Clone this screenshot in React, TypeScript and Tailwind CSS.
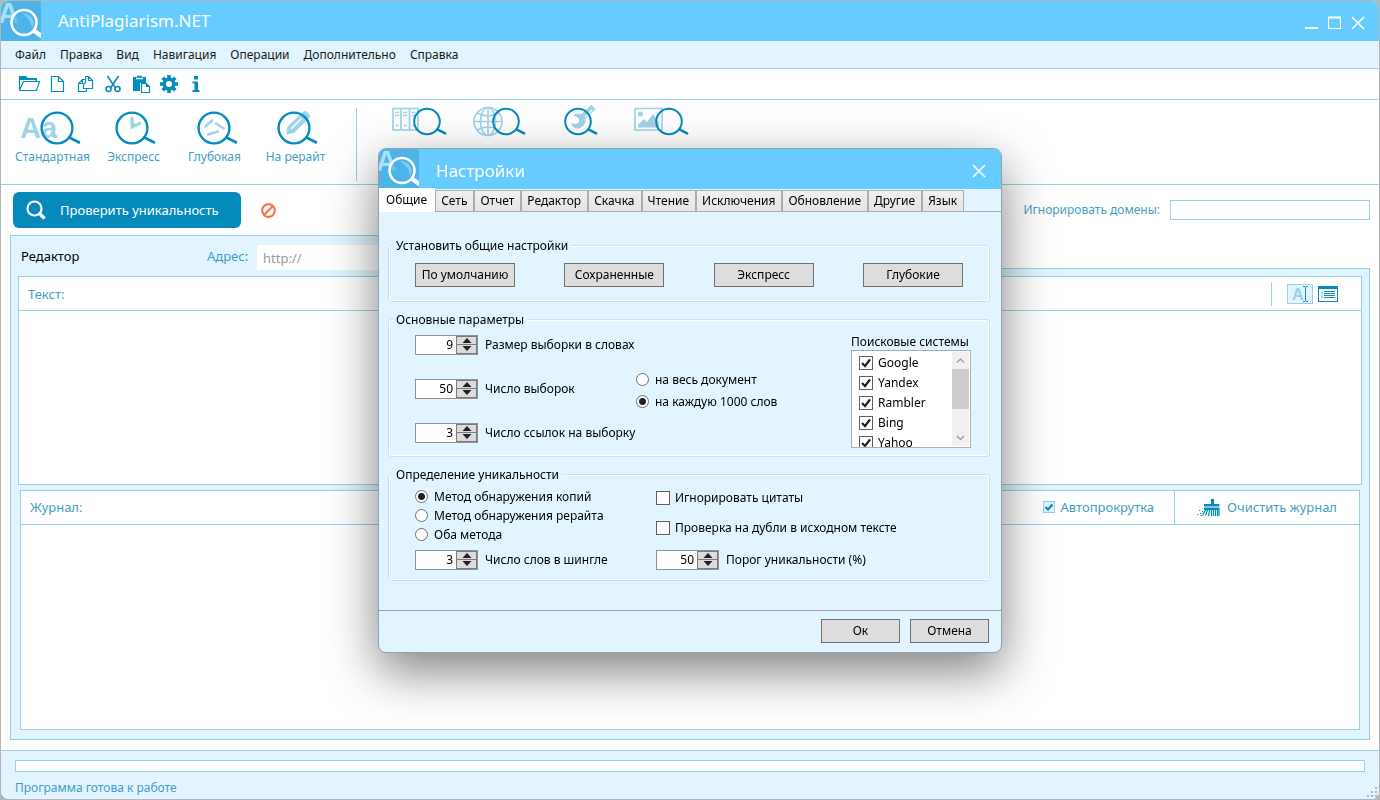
import React from 'react';
import clsx from 'clsx';

const menuItems = ['Файл', 'Правка', 'Вид', 'Навигация', 'Операции', 'Дополнительно', 'Справка'];

const settingsTabs = [
  'Общие', 'Сеть', 'Отчет', 'Редактор', 'Скачка', 'Чтение', 'Исключения', 'Обновление', 'Другие', 'Язык',
];

const presets = ['По умолчанию', 'Сохраненные', 'Экспресс', 'Глубокие'];

const engines = ['Google', 'Yandex', 'Rambler', 'Bing', 'Yahoo'];

const AppLogo: React.FC = () => (
  <svg width="40" height="40" viewBox="0 0 40 40" className="shrink-0" aria-hidden="true">
    <rect width="40" height="40" fill="#4db3e9" />
    <text x="-3" y="22" fontFamily="Liberation Sans, sans-serif" fontWeight="700" fontSize="29" fill="#a5e1fc">A</text>
    <path d="M32 29 L41 35.500" stroke="#fff" strokeWidth="4.500" />
    <circle cx="23" cy="21.500" r="12.500" fill="#4db3e9" fillOpacity="0.7" stroke="#fff" strokeWidth="2.600" />
    <path d="M21 12 q9 0 12 9 q0 4 -2 6 q-1 -9 -10 -15z" fill="#7ccbf3" />
  </svg>
);

const CloseIcon: React.FC = () => (
  <svg width="14" height="14" viewBox="0 0 14 14" aria-hidden="true">
    <path d="M1 1 L13 13 M13 1 L1 13" stroke="#fff" strokeWidth="1.500" fill="none" />
  </svg>
);

const Lens: React.FC<{ cx: number; cy: number; r: number }> = ({ cx, cy, r }) => (
  <g fill="none" stroke="#058bbd" strokeWidth={r > 14 ? 2.4 : 2}>
    <circle cx={cx} cy={cy} r={r} />
    <path
      d={`M${cx + r * 0.8} ${cy + r * 0.62} L${cx + r * 1.42} ${cy + r * 0.93}`}
      strokeWidth={r > 14 ? 2.8 : 2.4}
      strokeLinecap="round"
    />
  </g>
);

const tools = [
  {
    name: 'Открыть',
    icon: (
      <>
        <path d="M1.500 16.500 V3.500 M1.500 16.500 H18.500 L21.500 7.500 H5.500 L1.500 16" fill="none" stroke="#058bbd" strokeWidth="1.200" />
        <path d="M1 2 h7 l2 2 h9 v3.500 h-1.500 v-1.500 h-16.500z" fill="#058bbd" />
      </>
    ),
  },
  {
    name: 'Создать',
    icon: <path d="M5.500 2.500 H12.500 L17.500 7.500 V17.500 H5.500 Z M12.500 2.500 V7.500 H17.500" fill="none" stroke="#058bbd" strokeWidth="1.200" />,
  },
  {
    name: 'Копировать',
    icon: (
      <>
        <path d="M9.500 17.500 H4.500 V9.500 L8.500 5.500 H11.500 M4.500 9.500 H8.500 V5.500 M9.500 17.500 H12.500 V14.500" fill="none" stroke="#058bbd" strokeWidth="1.200" />
        <path d="M9.500 14.500 H18.500 V6.500 L14.500 2.500 H11.500 V8.500 L9.500 10.500 Z M14.500 2.500 V6.500 H18.500" fill="none" stroke="#058bbd" strokeWidth="1.200" />
      </>
    ),
  },
  {
    name: 'Вырезать',
    icon: (
      <g fill="none" stroke="#058bbd" strokeWidth="1.600">
        <path d="M5.500 2 L13.500 14 M16.500 2 L8.500 14" />
        <circle cx="6.500" cy="15" r="2.500" />
        <circle cx="15.500" cy="15" r="2.500" />
      </g>
    ),
  },
  {
    name: 'Вставить',
    icon: (
      <>
        <path d="M3 3 H16 V9 H10 V17 H3 Z" fill="#058bbd" />
        <path d="M6 4.500 H13" stroke="#fff" strokeWidth="1.500" />
        <path d="M7 2.500 H12" stroke="#058bbd" strokeWidth="1.500" />
        <path d="M11.500 9.500 H16.500 L19.500 12.500 V18.500 H11.500 Z M16.500 9.500 V12.500 H19.500" fill="#fff" stroke="#058bbd" strokeWidth="1.200" />
      </>
    ),
  },
  {
    name: 'Настройки',
    icon: (
      <>
        <path
          d="M11 1 V19 M2 10 H20 M4.700 3.700 L17.300 16.300 M17.300 3.700 L4.700 16.300"
          stroke="#058bbd"
          strokeWidth="3.600"
        />
        <circle cx="11" cy="10" r="4.800" fill="#fff" stroke="#058bbd" strokeWidth="3.600" />
      </>
    ),
  },
  {
    name: 'О программе',
    icon: (
      <path d="M8 2 h4 v3.500 h-4z M6.500 7.500 h5.500 v8.500 h1.500 v2 h-7 v-2 h2 v-6.500 h-2z" fill="#058bbd" />
    ),
  },
];

const modes = [
  {
    name: 'Стандартная',
    icon: (
      <>
        <text x="8" y="28" fontFamily="Liberation Sans, sans-serif" fontWeight="700" fontSize="29" fill="#9fd3ea">Aa</text>
        <Lens cx={45} cy={18} r={15.4} />
      </>
    ),
  },
  {
    name: 'Экспресс',
    icon: (
      <>
        <path d="M37.500 7 l3 0 l0.500 7 l6.500 -2.500 l1 2.500 l-11 5.500z" fill="#9fd3ea" />
        <Lens cx={39} cy={18} r={15.4} />
      </>
    ),
  },
  {
    name: 'Глубокая',
    icon: (
      <>
        <path d="M31.500 16.500 L38 10.500 M42 13.500 L49.500 18.500 M34 24.500 L44 21.500" stroke="#9fd3ea" strokeWidth="2.600" strokeLinecap="round" />
        <Lens cx={40} cy={18} r={15.4} />
      </>
    ),
  },
  {
    name: 'На рерайт',
    icon: (
      <>
        <path d="M31 24.500 l1.500 -8 l13 -12.500 l6.500 6.500 l-13 12.500z M47 3 l1.500 -1.500 q2 -1 3.500 0.500 l2.500 2.500 q1.500 2 0 3.500 l-1.500 1.500z" fill="#9fd3ea" />
        <path d="M36 19 L46.500 8.500" stroke="#fff" strokeWidth="1.200" />
        <Lens cx={39} cy={18} r={15.4} />
      </>
    ),
  },
];

const extraModes = [
  {
    name: 'Пакетная проверка',
    icon: (
      <>
        <path
          d="M15 5.500 H40 V27 H15 Z M23 5.500 V27 M31.500 5.500 V27 M17 9.500 h4 M17 12.500 h4 M25 9.500 h4 M25 12.500 h4 M33.500 9.500 h4 M33.500 12.500 h4 M18 22.500 h2.500 M26 22.500 h2.500 M34.500 22.500 h2.500"
          fill="none"
          stroke="#9fd3ea"
          strokeWidth="1.700"
        />
        <Lens cx={49} cy={18.5} r={12.8} />
      </>
    ),
  },
  {
    name: 'Проверка сайта',
    icon: (
      <>
        <g fill="none" stroke="#9fd3ea" strokeWidth="1.700">
          <circle cx="29" cy="18.500" r="14" />
          <path d="M29 4.500 V32.500 M15 18.500 H43 M18 10 Q29 16 40 10 M18 27 Q29 21 40 27" />
          <ellipse cx="29" cy="18.500" rx="7.500" ry="14" />
        </g>
        <Lens cx={47} cy={18.5} r={12.8} />
      </>
    ),
  },
  {
    name: 'Инструменты',
    icon: (
      <>
        <path d="M43 14 L53.500 4" stroke="#9fd3ea" strokeWidth="6" />
        <path d="M45 14 L52 7" stroke="#fff" strokeWidth="1.200" />
        <path
          d="M33 12.500 q6 -4 10.500 0 q4 5 0 10 q-5 5 -10.500 1.500 l-2 -4 q6 2.500 8 -1 q1.500 -5 -6 -6.500z"
          fill="#9fd3ea"
        />
        <Lens cx={38} cy={18.5} r={12.8} />
      </>
    ),
  },
  {
    name: 'Проверка изображений',
    icon: (
      <>
        <path d="M14 5.500 H41 V27 H14 Z" fill="none" stroke="#9fd3ea" strokeWidth="1.700" />
        <circle cx="19.500" cy="11" r="2.600" fill="#9fd3ea" />
        <path d="M17 24.500 V22 L23 16 L26 19 L32 11 L38 19 V24.500 Z" fill="#9fd3ea" />
        <Lens cx={48} cy={18.5} r={12.8} />
      </>
    ),
  },
];

type SpinnerProps = { id: string; value: number; label: string };

const Spinner: React.FC<SpinnerProps> = ({ id, value, label }) => (
  <div className="flex items-center gap-[7px]">
    <div className="flex h-5 w-[63px] shrink-0 border border-[#8d9297] bg-white">
      <input
        id={id}
        type="text"
        inputMode="numeric"
        defaultValue={value}
        className="w-0 min-w-0 flex-1 bg-transparent pr-[3px] text-right leading-4 outline-none"
      />
      <div className="flex w-[21px] flex-col gap-px border border-[#7b7b7b] bg-[#7b7b7b]">
        <button type="button" aria-label="Больше" className="flex flex-1 items-center justify-center bg-[#dcdcdc]">
          <svg width="10" height="5" viewBox="0 0 10 5"><path d="M0.500 5 L5 0 L9.500 5z" fill="#222" /></svg>
        </button>
        <button type="button" aria-label="Меньше" className="flex flex-1 items-center justify-center bg-[#dcdcdc]">
          <svg width="10" height="5" viewBox="0 0 10 5"><path d="M0.500 0 L5 5 L9.500 0z" fill="#222" /></svg>
        </button>
      </div>
    </div>
    <label htmlFor={id} className="whitespace-nowrap">{label}</label>
  </div>
);

type RadioProps = { name: string; label: string; checked?: boolean };

const Radio: React.FC<RadioProps> = ({ name, label, checked }) => (
  <label className="flex items-center gap-1.5 whitespace-nowrap">
    <input
      type="radio"
      name={name}
      defaultChecked={checked}
      className="size-[13px] shrink-0 appearance-none rounded-full border border-[#707070] bg-white checked:bg-[radial-gradient(circle,#212121_0_3px,#fff_4px)]"
    />
    {label}
  </label>
);

type CheckProps = { label: string; checked?: boolean };

const Check: React.FC<CheckProps> = ({ label, checked }) => (
  <label className="flex items-center gap-[5px] whitespace-nowrap">
    <span className="grid size-3.5 shrink-0 grid-cols-1">
      <input
        type="checkbox"
        defaultChecked={checked}
        className="peer col-start-1 row-start-1 size-3.5 appearance-none border border-[#606060] bg-white"
      />
      <svg viewBox="0 0 14 14" className="pointer-events-none invisible col-start-1 row-start-1 size-3.5 peer-checked:visible">
        <path d="M3 7 L6 10 L11 3.500" fill="none" stroke="#212121" strokeWidth="2.200" />
      </svg>
    </span>
    {label}
  </label>
);

const Group: React.FC<{ title: string; className?: string; children: React.ReactNode }> = ({ title, className, children }) => (
  <fieldset className="rounded-[3px] border border-[#d5dfe5] shadow-[inset_0_0_0_1px_#fff]">
    <legend className="ml-1 bg-[#e1f4ff] px-[3px] leading-5">{title}</legend>
    <div className={className}>{children}</div>
  </fieldset>
);

const SettingsDialog: React.FC = () => (
  <div
    role="dialog"
    aria-labelledby="settings-title"
    className="flex w-[624px] flex-col overflow-hidden rounded-lg border border-[#8fa3ae] bg-[#e1f4ff] text-[12px] leading-4 text-black shadow-[0_18px_50px_rgba(0,0,0,0.5)]"
  >
    <header className="flex h-10 items-center bg-[#66ccff] text-white">
      <AppLogo />
      <h2 id="settings-title" className="flex-1 pt-1 pl-[17px] text-[17px]">Настройки</h2>
      <button type="button" aria-label="Закрыть" className="mt-1 mr-[15px]"><CloseIcon /></button>
    </header>

    <div role="tablist" className="flex h-[23px] items-end border-b border-[#acacac]">
      {settingsTabs.map((tab, index) => (
        <button
          key={tab}
          type="button"
          role="tab"
          aria-selected={index === 0}
          className={clsx(
            'whitespace-nowrap',
            index === 0
              ? '-mb-px h-6 bg-white pr-2 pl-[7px]'
              : 'h-[21px] border border-b-0 border-[#acacac] bg-linear-to-b from-[#f0f0f0] to-[#e5e5e5] pr-1.5 pl-[5px]'
          )}
        >
          {tab}
        </button>
      ))}
    </div>

    <div className="flex flex-col gap-2 pt-6 pr-[11px] pb-[29px] pl-[9px]">
      <Group title="Установить общие настройки" className="flex justify-between px-[26px] pt-[7px] pb-[14px]">
        {presets.map((preset) => (
          <button key={preset} type="button" className="h-6 w-[100px] border border-[#707070] bg-[#dddddd]">
            {preset}
          </button>
        ))}
      </Group>

      <Group title="Основные параметры" className="flex pr-[18px] pb-2 pl-[26px]">
        <div className="flex w-[221px] flex-col gap-6 pt-[5px]">
          <Spinner id="sample-size" value={9} label="Размер выборки в словах" />
          <Spinner id="sample-count" value={50} label="Число выборок" />
          <Spinner id="link-count" value={3} label="Число ссылок на выборку" />
        </div>
        <div className="flex flex-1 flex-col gap-1.5 pt-[42px]">
          <Radio name="scope" label="на весь документ" />
          <Radio name="scope" label="на каждую 1000 слов" checked />
        </div>
        <div className="w-[120px] pt-1">
          <div className="whitespace-nowrap">Поисковые системы</div>
          <div className="flex h-[98px] overflow-hidden border border-[#abadb3] bg-white">
            <div className="flex flex-1 flex-col gap-1 overflow-hidden pt-1 pl-[7px]">
              {engines.map((engine) => (
                <Check key={engine} label={engine} checked />
              ))}
            </div>
            <div className="my-px mr-px flex w-[17px] flex-col items-center bg-[#f0f0f0]">
              <svg width="17" height="17" viewBox="0 0 17 17"><path d="M5 10.500 L8.500 7 L12 10.500" fill="none" stroke="#a0a0a0" strokeWidth="1.500" /></svg>
              <div className="h-10 w-full bg-[#cdcdcd]" />
              <svg width="17" height="17" viewBox="0 0 17 17" className="mt-auto"><path d="M5 7 L8.500 10.500 L12 7" fill="none" stroke="#a0a0a0" strokeWidth="1.500" /></svg>
            </div>
          </div>
        </div>
      </Group>

      <Group title="Определение уникальности" className="flex pr-4 pb-2.5 pl-[26px]">
        <div className="flex w-[241px] flex-col gap-[3px] pt-1">
          <Radio name="method" label="Метод обнаружения копий" checked />
          <Radio name="method" label="Метод обнаружения рерайта" />
          <Radio name="method" label="Оба метода" />
          <div className="pt-1">
            <Spinner id="shingle" value={3} label="Число слов в шингле" />
          </div>
        </div>
        <div className="flex flex-1 flex-col gap-[14px] pt-[5px]">
          <Check label="Игнорировать цитаты" />
          <Check label="Проверка на дубли в исходном тексте" />
          <Spinner id="threshold" value={50} label="Порог уникальности (%)" />
        </div>
      </Group>
    </div>

    <footer className="flex justify-end gap-[10px] border-t border-[#a0a0a0] pt-2 pr-3 pb-[9px]">
      <button type="button" className="h-6 w-[79px] border border-[#707070] bg-[#dddddd]">Ок</button>
      <button type="button" className="h-6 w-[79px] border border-[#707070] bg-[#dddddd]">Отмена</button>
    </footer>
  </div>
);

const App: React.FC = () => {
  return (
    <div className="h-screen min-h-[700px] bg-[#b3b7ba] p-px font-['Noto_Sans','Segoe_UI',sans-serif] text-[13px] leading-5 text-[#3fa0c4]">
      <div className="flex h-full flex-col overflow-hidden rounded-lg bg-white">
        <header className="flex h-10 shrink-0 items-center bg-[#66ccff] text-white">
          <AppLogo />
          <h1 className="flex-1 pl-[17px] text-[17px]">AntiPlagiarism.NET</h1>
          <div className="flex items-center gap-2.5 pt-1 pr-[14px]">
            <button type="button" aria-label="Свернуть">
              <svg width="13" height="14" viewBox="0 0 13 14"><path d="M0 12 H13" stroke="#fff" strokeWidth="2" /></svg>
            </button>
            <button type="button" aria-label="Развернуть">
              <svg width="13" height="14" viewBox="0 0 13 14"><path d="M0.500 1 H12.500 V12.500 H0.500 Z M0 2 H13" fill="none" stroke="#fff" strokeWidth="1.200" /></svg>
            </button>
            <button type="button" aria-label="Закрыть"><CloseIcon /></button>
          </div>
        </header>

        <nav className="flex h-7 shrink-0 items-center gap-[14px] border-b border-[#99d0e4] bg-[#e1f4ff] pl-[14px] text-[12px] text-[#1b1b1b]">
          {menuItems.map((item) => (
            <button key={item} type="button">{item}</button>
          ))}
        </nav>

        <div className="flex h-[31px] shrink-0 items-center border-b border-[#99d0e4] pl-[14px]">
          {tools.map((tool) => (
            <button key={tool.name} type="button" aria-label={tool.name} className="flex w-7 justify-center">
              <svg width="22" height="20" viewBox="0 0 22 20">{tool.icon}</svg>
            </button>
          ))}
        </div>

        <div className="flex h-[85px] shrink-0 border-b border-[#99d0e4] pl-[11px]">
          {modes.map((mode) => (
            <button key={mode.name} type="button" className="flex w-[81px] flex-col items-center pt-[10px] text-[12px] leading-4 whitespace-nowrap">
              <svg width="81" height="39" viewBox="0 0 81 39">{mode.icon}</svg>
              {mode.name}
            </button>
          ))}
          <div className="mt-2 mr-[21px] ml-5 h-[73px] w-px bg-[#99d0e4]" />
          {extraModes.map((mode) => (
            <button key={mode.name} type="button" aria-label={mode.name} className="flex w-[81px] pt-[3px]">
              <svg width="81" height="38" viewBox="0 0 81 38">{mode.icon}</svg>
            </button>
          ))}
        </div>

        <div className="flex shrink-0 items-center py-[7px] pr-[9px] pl-3">
          <button type="button" className="flex h-9 w-[228px] items-center rounded-md bg-[#058bbb] text-white">
            <svg width="20" height="20" viewBox="0 0 20 20" className="mr-[14px] ml-[13px]">
              <circle cx="8.500" cy="8.500" r="7" fill="none" stroke="#fff" strokeWidth="2.200" />
              <path d="M13.500 13.500 L18.500 18.500" stroke="#fff" strokeWidth="3.200" />
            </svg>
            Проверить уникальность
          </button>
          <button type="button" aria-label="Остановить" className="ml-5">
            <svg width="15" height="15" viewBox="0 0 15 15">
              <circle cx="7.500" cy="7.500" r="6.300" fill="none" stroke="#f5774f" strokeWidth="2.200" />
              <path d="M3.500 11.500 L11.500 3.500" stroke="#f5774f" strokeWidth="2.400" />
            </svg>
          </button>
          <label htmlFor="ignore-domains" className="ml-auto pr-[10px] text-[12px]">Игнорировать домены:</label>
          <input id="ignore-domains" type="text" className="h-5 w-[200px] border border-[#99d0e4] bg-white px-1 outline-none" />
        </div>

        <main className="flex min-h-0 flex-1 flex-col px-[9px] pb-[10px]">
          <div className="z-10 -mb-0.5 flex h-[35px] w-1/2 shrink-0 items-end border border-b-0 border-[#99d0e4] bg-[#e1f4ff] pl-2.5">
            <h2 className="w-[186px] pb-1 text-black">Редактор</h2>
            <label htmlFor="address" className="w-[50px] pb-1">Адрес:</label>
            <input
              id="address"
              type="text"
              placeholder="http://"
              className="h-[25px] min-w-0 flex-1 bg-white px-1.5 outline-none placeholder:text-[#9b9b9b]"
            />
          </div>

          <div className="flex min-h-0 flex-1 flex-col gap-[5px] border border-[#99d0e4] bg-[#e1f4ff] px-[7px] pt-[7px] pb-[9px]">
            <section className="flex min-h-0 flex-[13] flex-col border border-[#99d0e4] bg-white">
              <div className="flex h-[34px] shrink-0 items-center border-b border-[#99d0e4] pr-[23px] pl-[9px]">
                <label htmlFor="source-text" className="flex-1">Текст:</label>
                <div className="mr-[15px] h-6 w-px bg-[#99d0e4]" />
                <button type="button" aria-label="Режим правки" className="mr-[5px]">
                  <svg width="26" height="20" viewBox="0 0 26 20">
                    <rect x="0.500" y="0.500" width="25" height="19" fill="#e1f4ff" stroke="#99d0e4" />
                    <text x="5" y="16" fontFamily="Liberation Sans, sans-serif" fontWeight="700" fontSize="16" fill="#99d0e4">A</text>
                    <path d="M18.500 3 V17 M16 2.500 H18 M19 2.500 H21 M16 17.500 H18 M19 17.500 H21" stroke="#058bbd" strokeWidth="1" />
                  </svg>
                </button>
                <button type="button" aria-label="Список">
                  <svg width="20" height="16" viewBox="0 0 20 16">
                    <rect x="0.500" y="0.500" width="19" height="15" fill="#fff" stroke="#058bbd" />
                    <path d="M0 1.500 H20" stroke="#058bbd" strokeWidth="3" />
                    <path d="M6 5.500 H17 M6 7.500 H17 M6 9.500 H17 M6 11.500 H17" stroke="#058bbd" />
                    <path d="M3 6.500 H5 M3 10.500 H5" stroke="#99d0e4" strokeWidth="2.500" />
                  </svg>
                </button>
              </div>
              <textarea id="source-text" className="w-full flex-1 resize-none p-2 outline-none" />
            </section>

            <section className="mx-[2px] flex min-h-0 flex-[15] flex-col border border-[#99d0e4] bg-white">
              <div className="flex h-[34px] shrink-0 items-center border-b border-[#99d0e4] pl-[9px]">
                <label htmlFor="journal" className="flex-1">Журнал:</label>
                <label className="flex items-center gap-1.5 pr-5">
                  <span className="grid size-3 shrink-0 grid-cols-1">
                    <input type="checkbox" defaultChecked className="peer col-start-1 row-start-1 size-3 appearance-none border border-[#99d0e4] bg-[#e1f4ff]" />
                    <svg viewBox="0 0 12 12" className="pointer-events-none invisible col-start-1 row-start-1 size-3 peer-checked:visible">
                      <path d="M2.500 6 L5 8.500 L9.500 3.500" fill="none" stroke="#058bbd" strokeWidth="2" />
                    </svg>
                  </span>
                  Автопрокрутка
                </label>
                <button type="button" className="flex h-full items-center gap-[7px] border-l border-[#99d0e4] pr-[22px] pl-[22px]">
                  <svg width="23" height="17" viewBox="0 0 23 17">
                    <path d="M14 0 h3 v5 h5.500 v2.500 h-15.500 v-2.500 h7z M7 8.500 h15.500 v2.500 h-15.500z" fill="#058bbd" />
                    <path d="M8.500 11 L5.500 16.500 M10.500 11 L8.500 16.500 M12.500 11 L11.500 17 M14.500 11 V17 M16.500 11 V17 M18.500 11 V17 M20.500 11 V17 M22 11 V17" stroke="#058bbd" strokeWidth="1.200" />
                    <path d="M0 15.500 h1.200 M3 14.500 h1.200 M2 11.500 h1.200 M5 12.500 h1.200 M3.500 16.500 h1.200" stroke="#058bbd" strokeWidth="1.200" />
                  </svg>
                  Очистить журнал
                </button>
              </div>
              <textarea id="journal" readOnly className="w-full flex-1 resize-none p-2 outline-none" />
            </section>
          </div>
        </main>

        <footer className="flex h-[49px] shrink-0 flex-col border-t border-[#99d0e4] bg-[#e1f4ff] px-[14px] pt-[9px]">
          <div className="h-3 shrink-0 border border-[#99d0e4] bg-white" />
          <div className="flex items-end justify-between pt-1.5">
            <span className="text-[12px] leading-5">Программа готова к работе</span>
            <svg width="11" height="11" viewBox="0 0 11 11" className="-mr-[13px]">
              <path d="M8 1 h2 M8 5 h2 M4 5 h2 M8 9 h2 M4 9 h2 M0 9 h2" stroke="#a9bac4" strokeWidth="2" />
            </svg>
          </div>
        </footer>
      </div>

      <div className="pointer-events-none fixed inset-0 z-20 flex items-center justify-center">
        <div className="pointer-events-auto">
          <SettingsDialog />
        </div>
      </div>
    </div>
  );
};

export default App;
